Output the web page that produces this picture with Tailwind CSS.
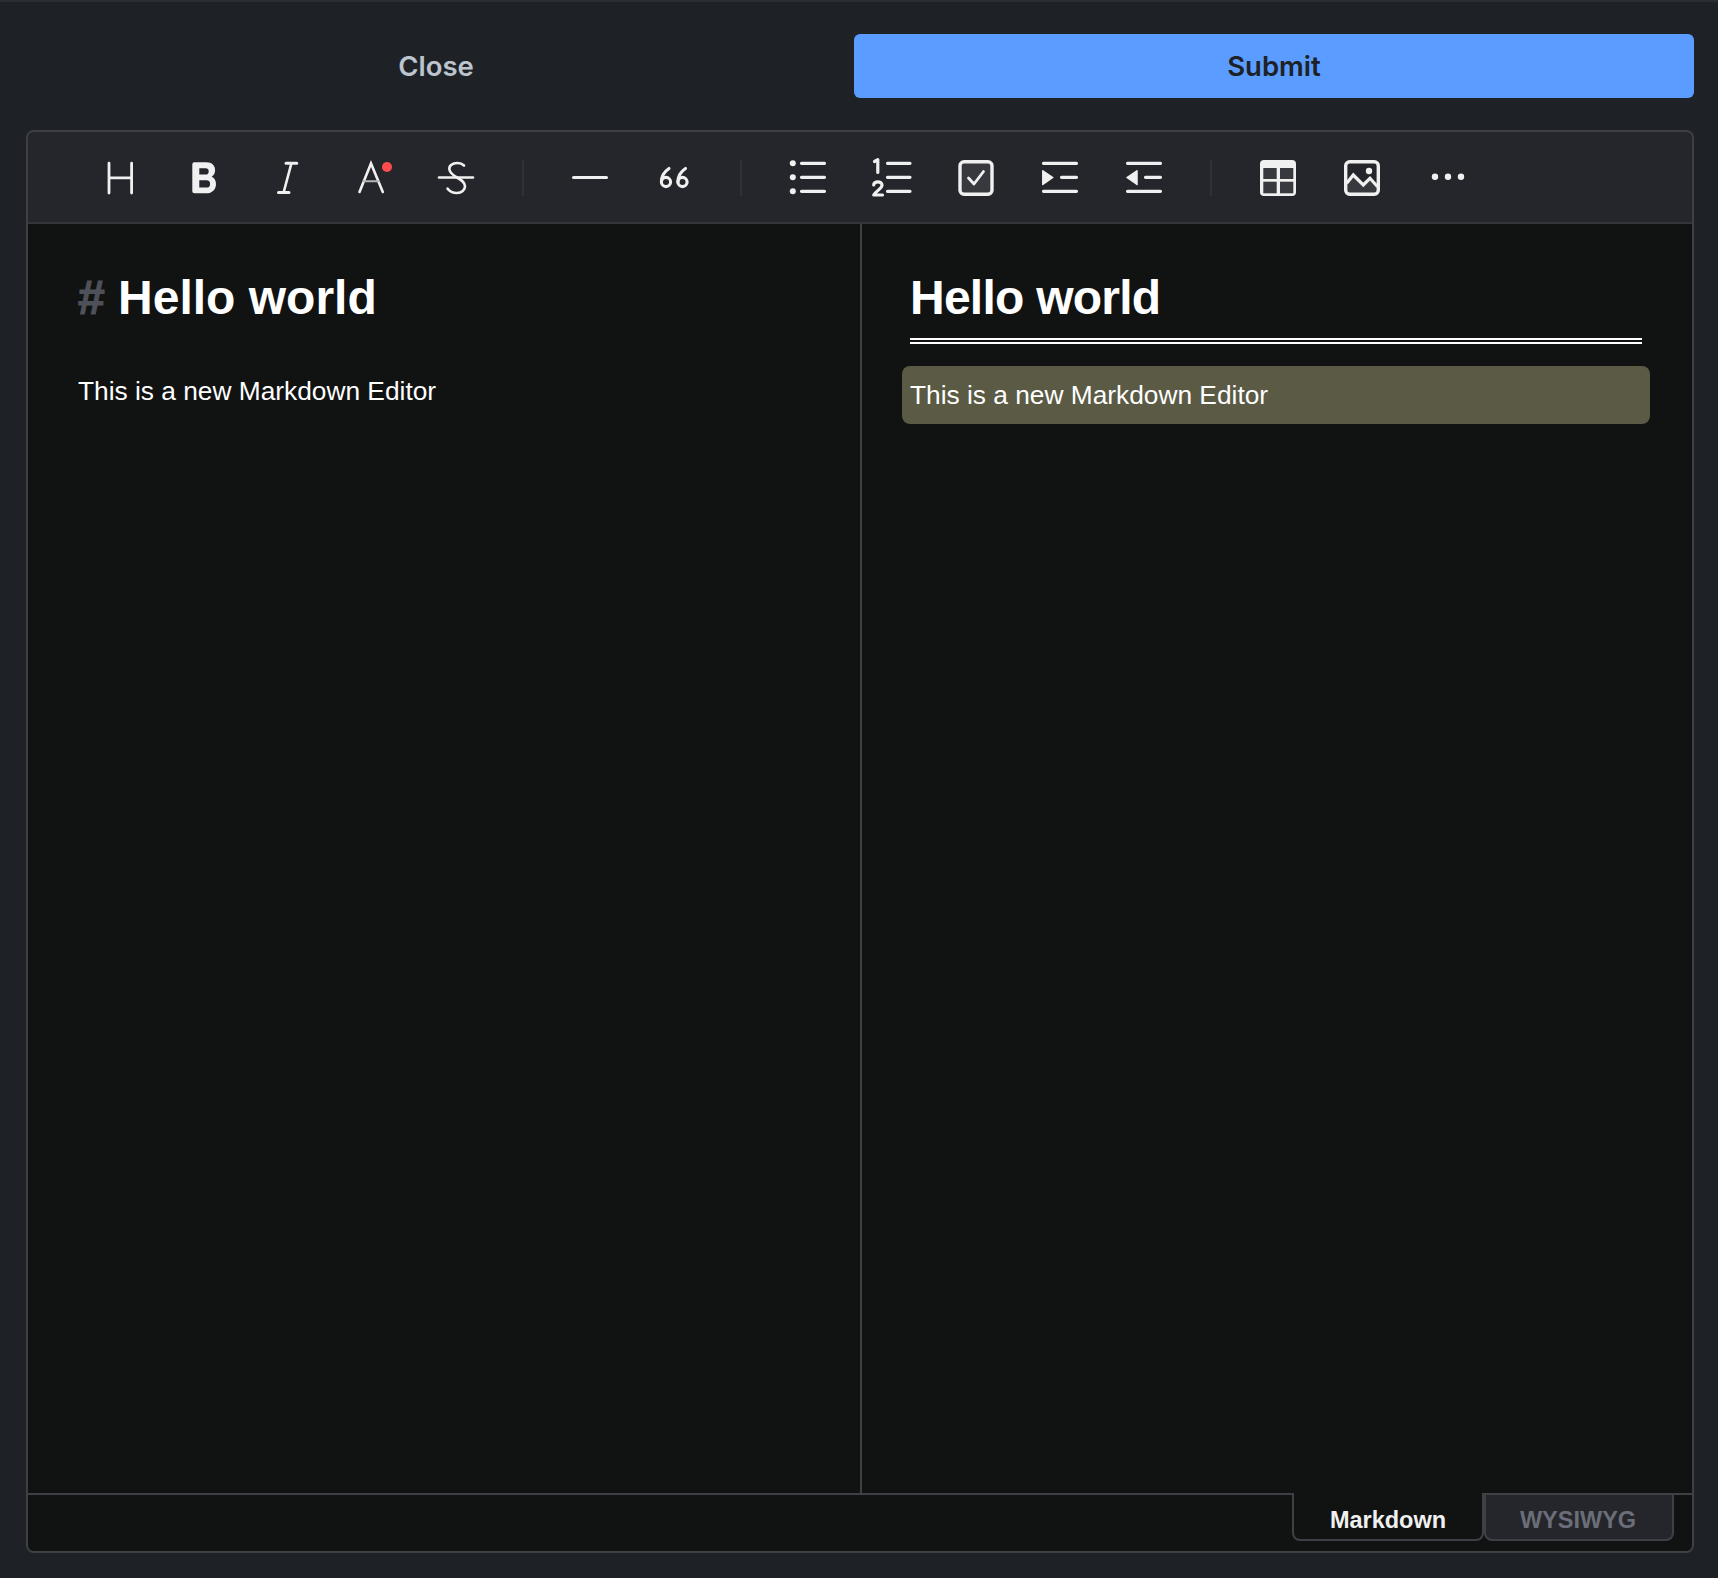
<!doctype html>
<html>
<head>
<meta charset="utf-8">
<script src="https://cdn.jsdelivr.net/npm/@tailwindcss/browser@4"></script>
</head>
<body class="bg-[#1e2227] font-['Liberation_Sans',Arial,sans-serif]">
<div class="h-[1578px] w-[1718px] overflow-hidden flex flex-col">
  <div class="h-[2px] bg-[#2a2e33]"></div>
  <div class="mt-[32px] flex h-[64px] pl-[18px] pr-[24px] font-['Inter',sans-serif] text-[27.5px] font-[560]">
    <button class="w-[836px] pt-px text-center text-[#bcc4ce]">Close</button>
    <button class="flex-1 rounded-[6px] bg-[#5a9cff] pt-px text-center text-[#1e2227]">Submit</button>
  </div>
  <div class="ml-[26px] mr-[24px] mt-[32px] flex h-[1423px] flex-col rounded-[8px] border-2 border-[#3e4046] overflow-hidden">
    <div class="flex h-[92px] shrink-0 items-center gap-12 border-b-2 border-[#33353a] bg-[#25262b] pl-[74px] pt-[2px]">
      <svg class="h-9 w-9 overflow-visible" viewBox="0 0 36 36" fill="none" stroke="#f0f0f0" stroke-width="2.800" stroke-linecap="round"><path d="M7 3.200V33M29.600 3.200V33M7 17.800h22.600"/></svg>
      <svg class="h-9 w-9 overflow-visible" viewBox="0 0 36 36"><path fill="#f0f0f0" fill-rule="evenodd" d="M8.300 2.300h12c5.800 0 8.800 3.400 8.800 8 0 3-1.400 5.300-3.500 6.400 2.800 1 4.400 3.800 4.400 7.300 0 5.700-4 9.300-9.500 9.300H8.300a2 2 0 0 1-2-2V4.300a2 2 0 0 1 2-2zM13.300 8.300v6.200h6.300a3.100 3.100 0 0 0 0-6.200zM13.300 20.300v7.200h7.200a3.600 3.600 0 0 0 0-7.200z"/></svg>
      <svg class="h-9 w-9 overflow-visible" viewBox="0 0 36 36" fill="none" stroke="#f0f0f0" stroke-linecap="round"><path stroke-width="3" d="M16 3.300h10.800M8.500 32.500h10.500"/><path stroke-width="2.600" d="M21.400 3.300 13.600 32.500"/></svg>
      <svg class="h-9 w-9 overflow-visible" viewBox="0 0 36 36" fill="none" stroke="#f0f0f0" stroke-linecap="round"><path stroke-width="2.600" d="M5.500 32 17 3.500 28.800 32"/><path stroke="#b5b6b9" stroke-width="2" d="M9.500 21.300h15.500"/><circle cx="33" cy="7" r="5" fill="#ff4d4f" stroke="none"/></svg>
      <svg class="h-9 w-9 overflow-visible" viewBox="0 0 36 36" fill="none" stroke="#f0f0f0" stroke-linecap="round"><path stroke-width="2.600" d="M1 17.500h34"/><path stroke-width="2.600" d="M26 5.500C24 3.500 21.500 3 19.500 3 14 3 10.500 6 11.500 10c.8 3.200 4 5.500 7.500 7.500 4.200 2.300 7.800 4.800 8 8.500.2 4-3.500 7-8 7-3.700 0-7.500-1.500-9.500-4.500"/></svg>
      <div class="h-[36px] w-[2px] bg-[#2f3136]"></div>
      <svg class="h-9 w-9 overflow-visible" viewBox="0 0 36 36" fill="none" stroke="#f0f0f0" stroke-linecap="round"><path stroke-width="3" d="M1.500 17.500h33"/></svg>
      <svg class="h-9 w-9 overflow-visible" viewBox="0 0 36 36" fill="none" stroke="#f0f0f0" stroke-linecap="round" stroke-width="3.100"><circle cx="10" cy="22" r="4.600"/><path d="M13 8.500C8.500 11.500 5.400 16 5.400 22"/><circle cx="26.500" cy="22" r="4.600"/><path d="M29.500 8.500C25 11.500 21.900 16 21.900 22"/></svg>
      <div class="h-[36px] w-[2px] bg-[#2f3136]"></div>
      <svg class="h-9 w-9 overflow-visible" viewBox="0 0 36 36" fill="none" stroke="#f0f0f0" stroke-linecap="round"><path stroke-width="3.200" d="M11.500 3.300H34.500M11.500 17.300H34.500M11.500 31.300H34.500"/><g fill="#f0f0f0" stroke="none"><circle cx="2.800" cy="3.300" r="3"/><circle cx="2.800" cy="17.300" r="3"/><circle cx="2.800" cy="31.300" r="3"/></g></svg>
      <svg class="h-9 w-9 overflow-visible" viewBox="0 0 36 36" fill="none" stroke="#f0f0f0" stroke-linecap="round" stroke-linejoin="round"><path stroke-width="3.200" d="M13.500 3.300H36M13.500 17.300H36M13.500 31.300H36"/><path stroke-width="3.200" d="M.5 1.500 3.800-.3V12.500M-.3 25c0-4.200 8.300-4.500 8.300.3 0 3.200-5.500 5.200-8.300 9.700H8.500"/></svg>
      <svg class="h-9 w-9 overflow-visible" viewBox="0 0 36 36" fill="none"><rect x="2" y="1.700" width="32" height="32.600" rx="4" fill="#38393e" stroke="#f0f0f0" stroke-width="3.400"/><path stroke="#f0f0f0" stroke-width="2.800" stroke-linecap="round" stroke-linejoin="round" d="M10.500 18l5.500 6 9.500-12.500"/></svg>
      <svg class="h-9 w-9 overflow-visible" viewBox="0 0 36 36" fill="none" stroke="#f0f0f0" stroke-linecap="round"><path stroke-width="3.200" d="M1.500 3.300H34.500M19.500 17.300H34.500M1.500 31.300H34.500"/><path fill="#f0f0f0" stroke="#f0f0f0" stroke-width="1.500" stroke-linejoin="round" d="M.8 10.800 10.800 17.500.8 24.500z"/></svg>
      <svg class="h-9 w-9 overflow-visible" viewBox="0 0 36 36" fill="none" stroke="#f0f0f0" stroke-linecap="round"><path stroke-width="3.200" d="M1.500 3.300H34.500M19.500 17.300H34.500M1.500 31.300H34.500"/><path fill="#f0f0f0" stroke="#f0f0f0" stroke-width="1.500" stroke-linejoin="round" d="M11 10.800 1 17.500 11 24.500z"/></svg>
      <div class="h-[36px] w-[2px] bg-[#2f3136]"></div>
      <svg class="h-9 w-9 overflow-visible" viewBox="0 0 36 36"><rect width="36" height="36" rx="4" fill="#f0f0f0"/><g fill="#38393e"><rect x="3.300" y="8" width="13.400" height="11"/><rect x="20" y="8" width="13.300" height="11"/><rect x="3.300" y="21.700" width="13.400" height="11.600"/><rect x="20" y="21.700" width="13.300" height="11.600"/></g></svg>
      <svg class="h-9 w-9 overflow-visible" viewBox="0 0 36 36" fill="none"><path fill="#38393e" d="M2 23.500 9.300 15l10 10 6.700-6.700L34 26.700V34H2z"/><path stroke="#f0f0f0" stroke-width="3.200" d="M2.700 23.300 9.300 15l10 10 6.700-6.700 7.600 8.400"/><rect x="1.700" y="1.700" width="32.600" height="32.600" rx="4" stroke="#f0f0f0" stroke-width="3.400"/><circle cx="25" cy="11" r="3.200" fill="#f0f0f0"/></svg>
      <svg class="h-9 w-9 overflow-visible" viewBox="0 0 36 36" fill="#f0f0f0"><circle cx="7" cy="16.700" r="3.200"/><circle cx="20" cy="16.700" r="3.200"/><circle cx="33" cy="16.700" r="3.200"/></svg>
    </div>
    <div class="flex flex-1 bg-[#111212] text-white">
      <div class="w-[834px] border-r-2 border-[#3e4046] pl-[50px] pt-[42px]">
        <h1 class="text-[48px] font-bold leading-[64px]"><span class="text-[#4e5159] [-webkit-text-stroke:1.2px_#4e5159]">#</span> Hello world</h1>
        <p class="mt-[41px] text-[26.3px] leading-[40px]">This is a new Markdown Editor</p>
      </div>
      <div class="flex-1 pl-[48px] pr-[50px] pt-[42px]">
        <h1 class="border-b-[6px] border-double border-white pb-[8px] text-[48px] font-bold leading-[64px] tracking-[-0.75px]">Hello world</h1>
        <p class="-mx-2 mt-[22px] h-[58px] rounded-[8px] bg-[#5a5a45] pl-2 pr-2 text-[26.3px] leading-[58px]">This is a new Markdown Editor</p>
      </div>
    </div>
    <div class="relative flex h-[58px] shrink-0 justify-end bg-[#111212] pr-[18px]">
      <div class="absolute inset-x-0 top-0 h-[2px] bg-[#3e4046]"></div>
      <div class="relative flex h-[48px] w-[192px] items-center justify-center rounded-b-[8px] border-x-2 border-b-2 border-[#3e4046] bg-[#111212] pt-[9px] text-[23.5px] font-bold text-[#f0f0f0]">Markdown</div>
      <div class="relative flex h-[48px] w-[190px] items-center justify-center rounded-b-[8px] border-x-2 border-b-2 border-t-2 border-[#3e4046] bg-[#25262b] pr-[2px] pt-[7px] text-[23.5px] font-bold text-[#6b6e78]">WYSIWYG</div>
    </div>
  </div>
</div>
</body>
</html>
